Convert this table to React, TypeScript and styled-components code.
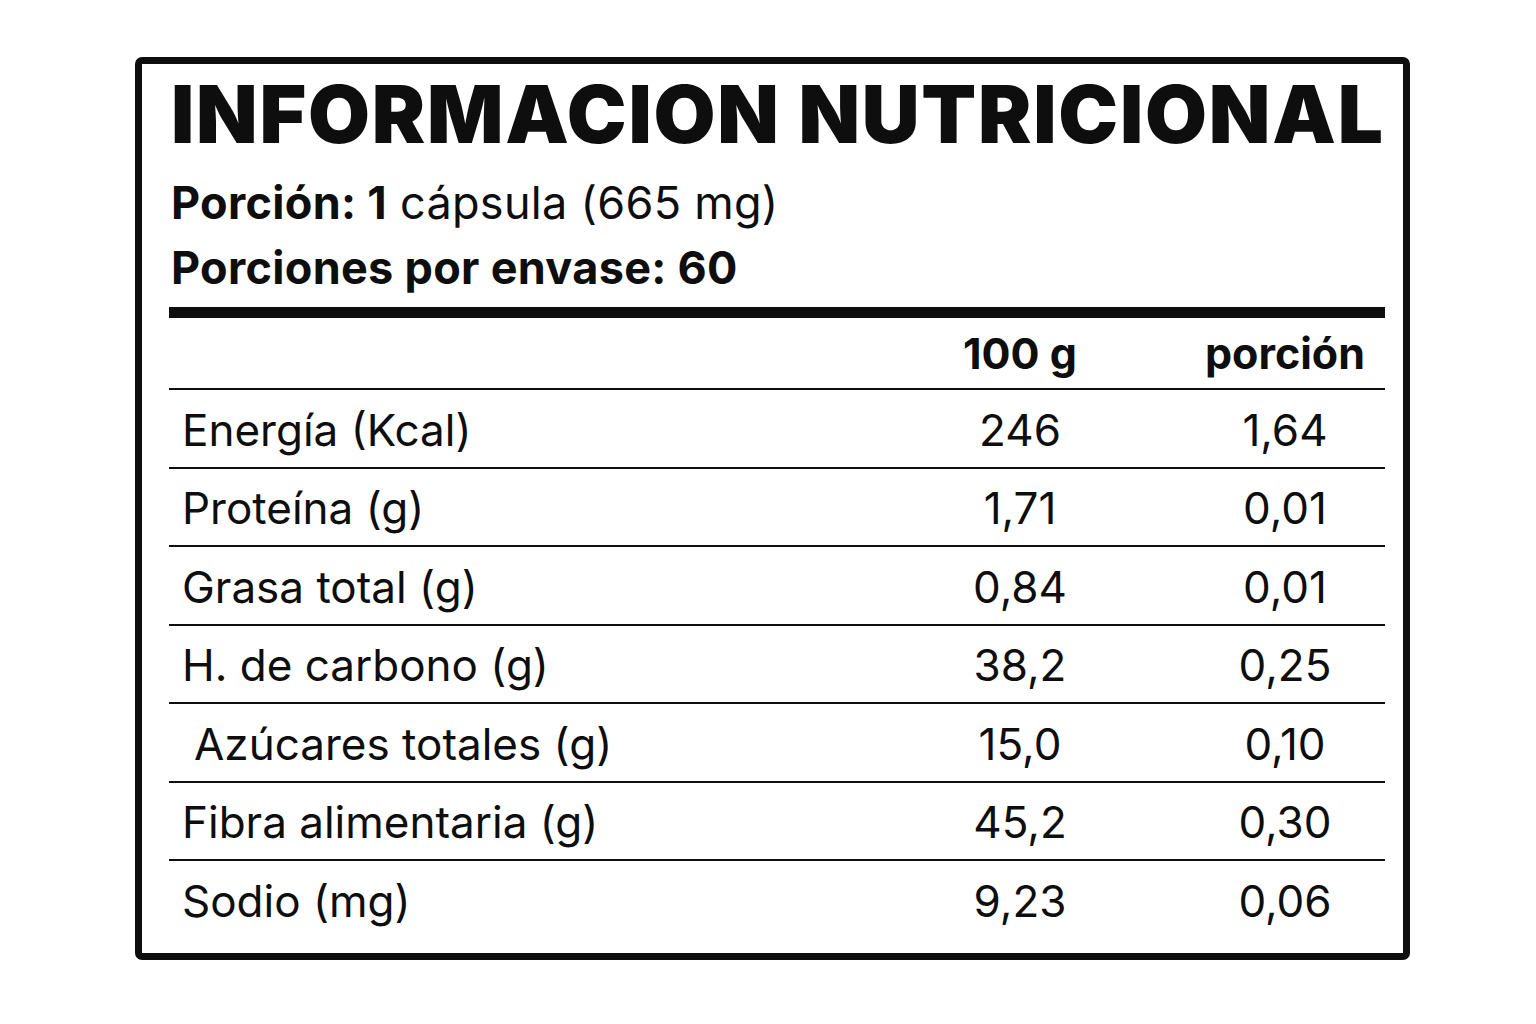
import React from "react";
import styled, { createGlobalStyle } from "styled-components";

const GlobalStyle = createGlobalStyle`
  html, body {
    margin: 0;
    padding: 0;
    background: #ffffff;
  }
  body {
    font-family: Inter, "Noto Sans", "Liberation Sans", sans-serif;
    color: #0e0e0e;
  }
`;

const Page = styled.div`
  width: 1536px;
  height: 1024px;
  box-sizing: border-box;
  padding: 57px 0 0 135px;
  background: #ffffff;
`;

const Label = styled.section`
  width: 1275px;
  height: 903px;
  box-sizing: border-box;
  border: 7px solid #0e0e0e;
  border-radius: 7px;
  padding: 10px 18px 0 27px;
  display: flex;
  flex-direction: column;
`;

const Title = styled.h1`
  margin: 0;
  padding-left: 2px;
  font-family: Inter, "Liberation Sans", sans-serif;
  font-weight: 900;
  font-size: 80px;
  line-height: 80px;
  letter-spacing: 1.8px;
  white-space: nowrap;
`;

const Sub = styled.div<{ $first?: boolean }>`
  margin-top: ${(p) => (p.$first ? "16px" : "0")};
  padding-left: 2px;
  font-size: 45px;
  line-height: 65px;
  letter-spacing: 0.3px;
  white-space: nowrap;
`;

const Strong = styled.span`
  font-weight: 700;
`;

const Plain = styled.span`
  font-weight: 400;
`;

const ThickRule = styled.div`
  margin-top: 7px;
  height: 11px;
  background: #0e0e0e;
`;

const Row = styled.div<{ $head?: boolean; $last?: boolean }>`
  display: grid;
  grid-template-columns: 1fr 200px 200px;
  column-gap: 65px;
  align-items: center;
  height: ${(p) => (p.$head ? "70px" : "76.5px")};
  border-bottom: ${(p) => (p.$last ? "none" : "2px solid #0e0e0e")};
`;

const Name = styled.div<{ $indent?: boolean }>`
  padding-left: ${(p) => (p.$indent ? "25px" : "13px")};
  padding-top: 3px;
  font-size: 44px;
  font-weight: 400;
  white-space: nowrap;
`;

const Value = styled.div`
  padding-top: 3px;
  text-align: center;
  font-size: 44px;
  font-weight: 400;
`;

const HeadCell = styled.div`
  text-align: center;
  font-size: 43px;
  font-weight: 700;
`;

const rows: { name: string; per100: string; portion: string; indent?: boolean }[] = [
  { name: "Energía (Kcal)", per100: "246", portion: "1,64" },
  { name: "Proteína (g)", per100: "1,71", portion: "0,01" },
  { name: "Grasa total (g)", per100: "0,84", portion: "0,01" },
  { name: "H. de carbono (g)", per100: "38,2", portion: "0,25" },
  { name: "Azúcares totales (g)", per100: "15,0", portion: "0,10", indent: true },
  { name: "Fibra alimentaria (g)", per100: "45,2", portion: "0,30" },
  { name: "Sodio (mg)", per100: "9,23", portion: "0,06" },
];

export default function App() {
  return (
    <Page>
      <GlobalStyle />
      <Label>
        <Title>INFORMACION NUTRICIONAL</Title>
        <Sub $first>
          <Strong>Porción: 1</Strong> <Plain>cápsula (665 mg)</Plain>
        </Sub>
        <Sub>
          <Strong>Porciones por envase: 60</Strong>
        </Sub>
        <ThickRule />
        <Row $head>
          <div />
          <HeadCell>100 g</HeadCell>
          <HeadCell>porción</HeadCell>
        </Row>
        {rows.map((r, i) => (
          <Row key={r.name} $last={i === rows.length - 1}>
            <Name $indent={r.indent}>{r.name}</Name>
            <Value>{r.per100}</Value>
            <Value>{r.portion}</Value>
          </Row>
        ))}
      </Label>
    </Page>
  );
}
